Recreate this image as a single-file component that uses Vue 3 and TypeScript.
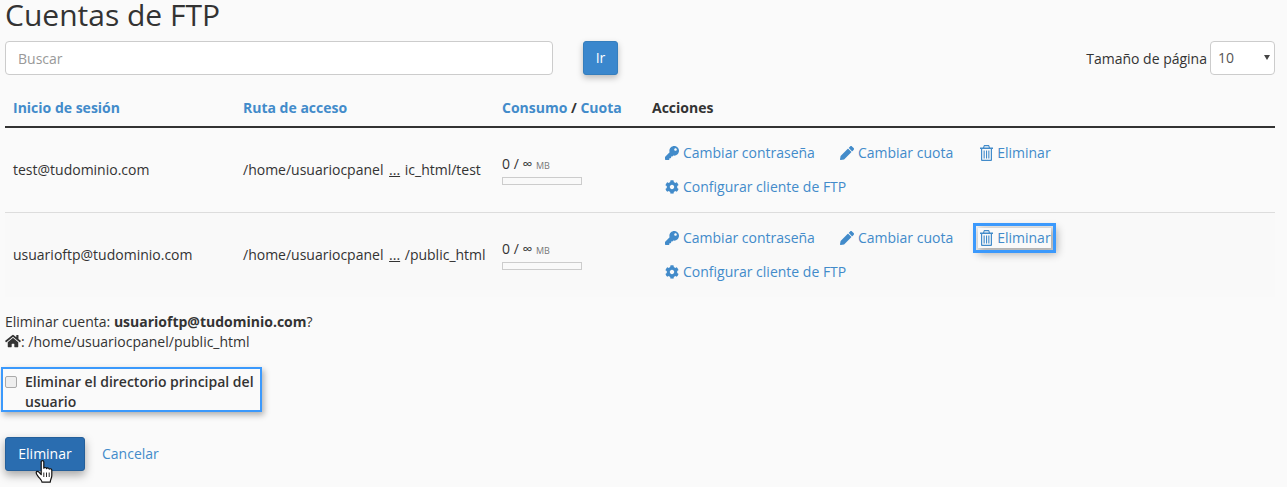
<script setup lang="ts">
// FTP accounts list with the delete confirmation open on the second row.
interface Account {
  login: string;
  pathStart: string;
  pathEnd: string;
  marked: boolean;
}

const accounts: Account[] = [
  { login: "test@tudominio.com", pathStart: "/home/usuariocpanel", pathEnd: "ic_html/test", marked: false },
  { login: "usuarioftp@tudominio.com", pathStart: "/home/usuariocpanel", pathEnd: "/public_html", marked: true },
];
</script>

<template>
  <main class="page">
    <h1 class="title">Cuentas de FTP</h1>

    <div class="toolbar">
      <input class="search" type="text" placeholder="Buscar" />
      <button class="btn go" type="button">Ir</button>
      <div class="page-size">
        <label class="size-label" for="size">Tamaño de página</label>
        <div class="select-wrap">
          <select id="size" class="size-select">
            <option>10</option>
          </select>
        </div>
      </div>
    </div>

    <table class="accounts">
      <colgroup>
        <col class="c-login" />
        <col class="c-path" />
        <col class="c-usage" />
        <col />
      </colgroup>
      <thead>
        <tr>
          <th><a>Inicio de sesión</a></th>
          <th><a>Ruta de acceso</a></th>
          <th><a>Consumo</a> / <a>Cuota</a></th>
          <th>Acciones</th>
        </tr>
      </thead>
      <tbody>
        <tr v-for="acc in accounts" :key="acc.login">
          <td>{{ acc.login }}</td>
          <td class="path">{{ acc.pathStart }} <u class="dots">...</u> {{ acc.pathEnd }}</td>
          <td>
            <div class="usage">0 / <span class="inf">∞</span> <span class="unit">MB</span></div>
            <div class="bar"></div>
          </td>
          <td class="actions">
            <div class="action-row">
              <a class="action a-pass">
                <svg class="icon" viewBox="0 0 512 512"><path d="M512 176C512 273 433 352 336 352c-11 0-22-1-33-3l-24 27a24 24 0 0 1-18 8H224v40c0 13-11 24-24 24h-40v40c0 13-11 24-24 24H24c-13 0-24-11-24-24v-78c0-6 3-12 7-17l162-162C163 214 160 195 160 176 160 79 239 0 336 0 433 0 512 79 512 176zM336 128c0 27 21 48 48 48s48-21 48-48-21-48-48-48-48 21-48 48z" /></svg>
                Cambiar contraseña
              </a>
              <a class="action a-quota">
                <svg class="icon" viewBox="0 0 512 512"><path d="M498 142l-46 46c-5 5-12 5-17 0L324 77c-5-5-5-12 0-17l46-46c19-19 49-19 68 0l60 60c19 19 19 49 0 68zM284 100L22 362 0 484c-3 16 11 31 28 28l122-21 262-263c5-5 5-12 0-17L301 100c-5-5-12-5-17 0z" /></svg>
                Cambiar cuota
              </a>
              <a class="action a-del" :class="{ marked: acc.marked }">
                <svg class="icon trash" viewBox="0 0 13 16"><path fill-rule="evenodd" d="M4 0h5l1 2.500h3V4h-1v11a1 1 0 0 1-1 1H2a1 1 0 0 1-1-1V4H0V2.500h3zM4.600 1.200L4.200 2.500h4.600l-.4-1.300zM2.200 4v10.800h8.600V4zM3.600 5.500h1.100v8H3.600zM6 5.500h1.100v8H6zM8.300 5.500h1.100v8H8.300z" /></svg>
                Eliminar
              </a>
            </div>
            <div class="action-row">
              <a class="action a-pass">
                <svg class="icon" viewBox="0 0 512 512"><path d="M487 316l-42-25c4-23 4-47 0-70l42-25c5-3 7-8 6-14-11-36-30-68-55-95-4-4-10-5-15-2l-42 25c-18-15-39-27-61-35V26c0-6-4-11-9-12-37-8-75-8-110 0-5 1-9 6-9 12v49c-22 8-43 20-61 35L89 86c-5-3-11-2-15 2-25 27-44 59-55 95-2 5 1 11 6 14l42 24c-4 23-4 47 0 70l-42 25c-5 3-7 9-6 14 11 36 30 68 55 95 4 4 10 5 15 2l42-25c18 15 39 27 61 35v49c0 6 4 11 9 12 37 8 75 8 110 0 5-1 9-6 9-12v-49c22-8 43-20 61-35l42 25c5 3 11 2 15-2 25-27 44-59 55-95 1-6-1-11-6-14zM256 336c-44 0-80-36-80-80s36-80 80-80 80 36 80 80-36 80-80 80z" /></svg>
                Configurar cliente de FTP
              </a>
            </div>
          </td>
        </tr>
      </tbody>
    </table>

    <section class="confirm">
      <p class="question">Eliminar cuenta: <strong>usuarioftp@tudominio.com</strong>?</p>
      <p class="home">
        <svg class="home-icon" viewBox="0 0 576 512"><path d="M280 148L96 300v164a16 16 0 0 0 16 16l112 0a16 16 0 0 0 16-16V368a16 16 0 0 1 16-16h64a16 16 0 0 1 16 16v96a16 16 0 0 0 16 16L464 480a16 16 0 0 0 16-16V300L296 148a12 12 0 0 0-16 0zM572 251L488 183V44a12 12 0 0 0-12-12h-56a12 12 0 0 0-12 12v73L318 43a48 48 0 0 0-61 0L4 251a12 12 0 0 0-1 17l25 31A12 12 0 0 0 45 301L280 107a12 12 0 0 1 16 0L531 301a12 12 0 0 0 17-2l25-31a12 12 0 0 0-2-17z" /></svg>: /home/usuariocpanel/public_html
      </p>

      <label class="remove-dir">
        <input class="check" type="checkbox" />
        <span>Eliminar el directorio principal del usuario</span>
      </label>

      <div class="buttons">
        <button class="btn danger" type="button">Eliminar</button>
        <a class="cancel">Cancelar</a>
        <svg class="cursor" viewBox="0 0 18 23">
          <path d="M6.200 1.800c0-1.500 2.600-1.500 2.600 0v6.400c.5-1 2.400-1 2.700.4.600-1 2.400-.8 2.700.6.800-.8 2.600-.5 2.600 1v5.300c0 2.800-1.400 3.600-1.600 6.700H7c-.4-2.400-2.400-3.700-4.100-6.100-1-1.400-2-2.800-1.700-3.800.4-1.200 1.800-1.100 2.700-.1l2.300 2.500z" fill="#fff" stroke="#111" stroke-width="1.200" stroke-linejoin="round" />
          <path d="M8.800 12.500v4.500M11.500 12.500v4.500M14.200 12.500v4.500" stroke="#111" stroke-width=".9" fill="none" />
        </svg>
      </div>
    </section>
  </main>
</template>

<style>
html,
body {
  background: #fafafa;
}
</style>

<style scoped>
.page {
  width: 1270px;
  height: 487px;
  margin-left: 5px;
  color: #333;
  font: 14px/20px "Open Sans", sans-serif;
}

.title {
  margin: 0;
  height: 41px;
  font-size: 30px;
  line-height: 30px;
  font-weight: 400;
}

.toolbar {
  display: flex;
  align-items: center;
  height: 34px;
}
.search {
  box-sizing: border-box;
  width: 548px;
  height: 34px;
  padding: 0 12px;
  border: 1px solid #ccc;
  border-radius: 4px;
  background: #fff;
  color: #555;
  font: inherit;
}
.search::placeholder {
  color: #999;
  opacity: 1;
}

.btn {
  border: 1px solid;
  border-radius: 3px;
  color: #fff;
  font: inherit;
  padding: 0;
}
.go {
  width: 35px;
  height: 34px;
  margin-left: 30px;
  background: #3a87cd;
  border-color: #357ebd;
  box-shadow: 0 3px 6px rgba(0, 0, 0, 0.25);
}

.page-size {
  margin-left: auto;
  display: flex;
  align-items: center;
  gap: 3px;
}
.size-label {
  margin-top: 2px;
}
.select-wrap {
  position: relative;
}
.select-wrap::after {
  content: "";
  position: absolute;
  right: 5px;
  top: 14px;
  border: 3px solid transparent;
  border-top: 5px solid #444;
  border-bottom: 0;
}
.size-select {
  display: block;
  box-sizing: border-box;
  width: 65px;
  height: 34px;
  padding: 0 7px;
  appearance: none;
  border: 1px solid #ccc;
  border-radius: 4px;
  background: #fff;
  color: #555;
  font: inherit;
}

.accounts {
  width: 100%;
  margin-top: 14px;
  border-collapse: collapse;
  table-layout: fixed;
}
.c-login {
  width: 230px;
}
.c-path {
  width: 259px;
}
.c-usage {
  width: 150px;
}
th {
  height: 37px;
  padding: 0 8px;
  text-align: left;
  font-weight: 700;
  border-bottom: 2px solid #333;
}
th a {
  color: #428bca;
}
td {
  height: 84px;
  padding: 0 8px;
  border-bottom: 1px solid #ddd;
}
tbody tr:last-child td {
  border-bottom: 0;
  background: #f9f9f9;
}
.path {
  white-space: nowrap;
}
.dots {
  margin: 0 1px 0 2px;
}

.usage {
  line-height: 16px;
}
.inf {
  font-size: 14px;
}
.unit {
  color: #777;
  font-size: 9px;
}
.bar {
  box-sizing: border-box;
  width: 80px;
  height: 8px;
  margin-top: 3px;
  border: 1px solid #ccc;
  background: #f9f9f9;
}

.actions {
  padding-left: 21px;
}
.action-row {
  display: flex;
  height: 34px;
  align-items: center;
}
.action {
  display: flex;
  align-items: center;
  gap: 4px;
  color: #428bca;
  white-space: nowrap;
}
.a-quota {
  margin-left: 25px;
}
.a-del {
  margin-left: 25px;
  padding-left: 2px;
}
.icon {
  width: 14px;
  height: 14px;
  fill: #428bca;
}
.trash {
  width: 13px;
  height: 16px;
}
.marked {
  outline: 3px solid #3b99fc;
  outline-offset: 2px;
  box-shadow: 3px 3px 8px 3px rgba(0, 0, 0, 0.3);
}

.confirm {
  margin-top: 15px;
}
.question,
.home {
  margin: 0;
  line-height: 20px;
}
.home-icon {
  width: 16px;
  height: 14px;
  fill: #333;
  vertical-align: -1px;
}

.remove-dir {
  display: flex;
  box-sizing: border-box;
  width: 261px;
  height: 45px;
  margin: 15px 0 0 -4px;
  padding: 3px 0 0 2px;
  gap: 8px;
  border: 2px solid #3b99fc;
  box-shadow: 2px 3px 6px rgba(0, 0, 0, 0.3);
  font-weight: 600;
}
.check {
  flex: none;
  width: 12px;
  height: 12px;
  margin: 4px 0 0;
  appearance: none;
  border: 1px solid #aaa;
  border-radius: 2px;
  background: #eee;
}

.buttons {
  position: relative;
  display: flex;
  align-items: center;
  gap: 17px;
  margin-top: 25px;
}
.danger {
  width: 80px;
  height: 34px;
  background: #2a6db0;
  border-color: #245f9a;
  box-shadow: 0 4px 10px rgba(0, 0, 0, 0.35);
}
.cancel {
  color: #428bca;
}
.cursor {
  position: absolute;
  left: 30px;
  top: 23px;
  width: 18px;
  height: 23px;
}
</style>
